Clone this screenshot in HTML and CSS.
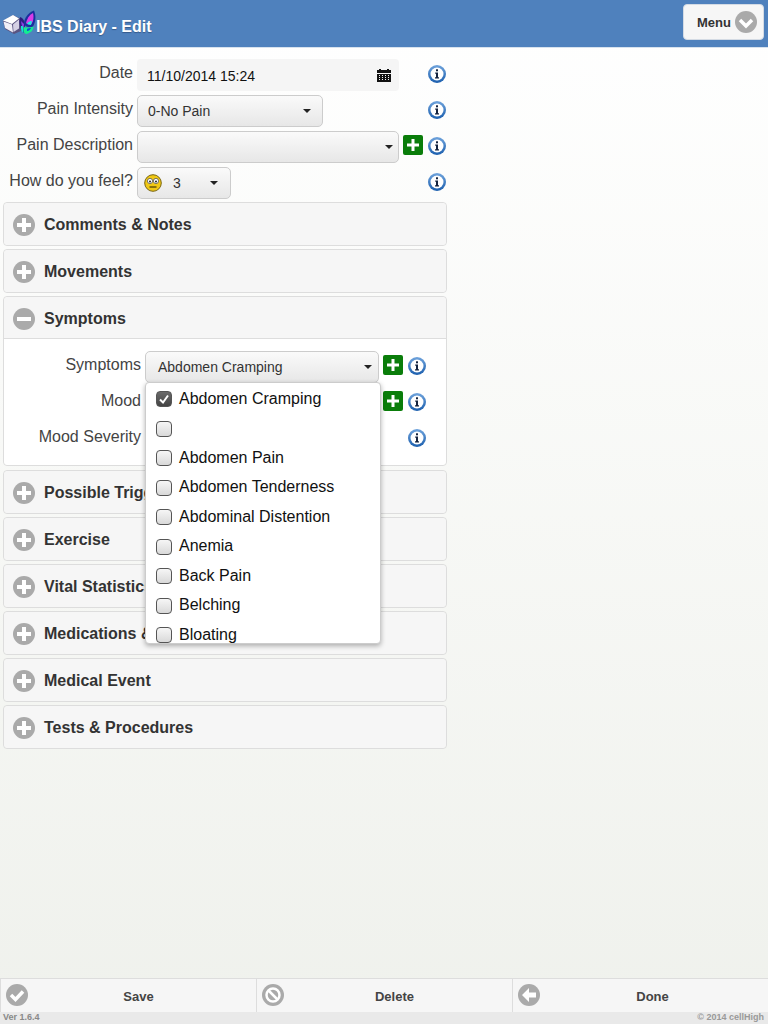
FILE: index.html
```html
<!DOCTYPE html>
<html lang="en">
<head>
    <meta charset="UTF-8">
    <meta name="viewport" content="width=device-width, initial-scale=1.0">
    <title>IBS Diary - Edit</title>
    <link rel="stylesheet" href="styles.css">
</head>
<body>
    <svg class="icon-defs" width="0" height="0">
        <defs>
            <linearGradient id="ring" x1="0" y1="0" x2="0" y2="1">
                <stop offset="0" stop-color="#6fa3dc"/>
                <stop offset="1" stop-color="#1c5fae"/>
            </linearGradient>
        </defs>
        <symbol id="info" viewBox="0 0 18 18">
            <circle cx="9" cy="9" r="9" fill="url(#ring)"/>
            <circle cx="9" cy="9" r="6.500" fill="#fff"/>
            <rect x="8" y="4.300" width="2" height="2" fill="#14233f"/>
            <path d="M7.200 7.400h2.800v4.800h1v1.300H7v-1.300h1V8.700h-.8z" fill="#14233f"/>
        </symbol>
        <symbol id="add" viewBox="0 0 20 20">
            <rect width="20" height="20" rx="2" fill="#0a7d0a"/>
            <path d="M8.500 4h3v4.500H16v3h-4.500V16h-3v-4.500H4v-3h4.500z" fill="#fff"/>
        </symbol>
        <symbol id="plus" viewBox="0 0 22 22">
            <circle cx="11" cy="11" r="11" fill="#aaa"/>
            <path d="M9 4h4v5h5v4h-5v5H9v-5H4V9h5z" fill="#fff"/>
        </symbol>
        <symbol id="minus" viewBox="0 0 22 22">
            <circle cx="11" cy="11" r="11" fill="#aaa"/>
            <rect x="4" y="9" width="14" height="4" fill="#fff"/>
        </symbol>
        <symbol id="caret" viewBox="0 0 8 4">
            <path d="M0 0h8L4 4z" fill="#222"/>
        </symbol>
    </svg>

    <header class="topbar">
        <svg class="logo" width="36" height="30" viewBox="0 0 36 30">
            <path d="M0 12 10 6l8 4v12l-7 3-9-5z" fill="#5a5480"/>
            <path d="M0 11.500 10 6l6 3.500-7 5.500z" fill="#fff"/>
            <path d="M.5 12.500 9 15.500l1 8-8-4.500z" fill="#f1eff7"/>
            <path d="M10 15.500l6-5v9l-5.500 3.500z" fill="#d5d1e4"/>
            <path d="M17 8c3 1 5 4 5 8l-1 8c-2 0-4-6-4.500-11z" fill="#2c1c80"/>
            <path d="M18 12l3 3-.5 6c-1-2-2-5-2.500-9z" fill="#8a3fe0"/>
            <path d="M21 15c0-6 4-11 10-13.500 2 5 2 11-1 16-3 1.500-7 1-9-2.500z" fill="#1a2f9e"/>
            <path d="M23 14c1-4 3-8 7-10 1 4 .5 8-1.500 11-2 1-4 .5-5.500-1z" fill="#d83ce8"/>
            <path d="M24 15c1-2 3-3 5-3l-1 4z" fill="#18f0e0"/>
            <path d="M21 18c3 1 7 .5 9.500-.5 0 3.500-3 7-7.500 7.500-2.500-1-3-4.500-2-7z" fill="#12ee90"/>
            <path d="M24 20c1-1 3-1 4-1-1 2-2 3-4 3z" fill="#0a50d0"/>
            <path d="M18 17l2 0 .5 7c-1 0-2-2-2.500-4z" fill="#18e0d0"/>
        </svg>
        <h1 class="topbar-title">IBS Diary - Edit</h1>
        <button type="button" class="menu-btn">Menu
            <svg width="22" height="22" viewBox="0 0 22 22">
                <circle cx="11" cy="11" r="11" fill="#aaa"/>
                <path d="M5 9l6 6 6-6" fill="none" stroke="#fff" stroke-width="3.500"/>
            </svg>
        </button>
    </header>

    <main class="content">
        <div class="form-row">
            <label class="field-label">Date</label>
            <div class="date-input">11/10/2014 15:24
                <svg class="calendar" width="14" height="13" viewBox="0 0 14 13">
                    <path d="M0 1h2V0h2v1h6V0h2v1h2v3H0z" fill="#111"/>
                    <path d="M0 5h14v8H0zM2 6v1h1V6zm3 0v1h1V6zm3 0v1h1V6zm3 0v1h1V6zM2 8v1h1V8zm3 0v1h1V8zm3 0v1h1V8zm3 0v1h1V8zM2 10v1h1v-1zm3 0v1h1v-1zm3 0v1h1v-1zm3 0v1h1v-1z" fill="#111" fill-rule="evenodd"/>
                </svg>
            </div>
            <svg class="info-icon"><use href="#info"/></svg>
        </div>
        <div class="form-row">
            <label class="field-label">Pain Intensity</label>
            <div class="select select-intensity">0-No Pain <svg class="caret"><use href="#caret"/></svg></div>
            <svg class="info-icon"><use href="#info"/></svg>
        </div>
        <div class="form-row">
            <label class="field-label">Pain Description</label>
            <div class="select select-wide"><svg class="caret"><use href="#caret"/></svg></div>
            <svg class="add-icon"><use href="#add"/></svg>
            <svg class="info-icon info-tight"><use href="#info"/></svg>
        </div>
        <div class="form-row form-row-last">
            <label class="field-label">How do you feel?</label>
            <div class="select select-feel">
                <svg class="smiley" width="18" height="18" viewBox="0 0 18 18">
                    <circle cx="9" cy="9" r="8.300" fill="#f0c814" stroke="#7a6610" stroke-width="1"/>
                    <circle cx="6" cy="7" r="2.600" fill="#fff" stroke="#555" stroke-width=".8"/>
                    <circle cx="12" cy="7" r="2.600" fill="#fff" stroke="#555" stroke-width=".8"/>
                    <circle cx="6" cy="7.400" r="1" fill="#222"/>
                    <circle cx="12" cy="7.400" r="1" fill="#222"/>
                    <path d="M5.500 13h7" stroke="#5c4c08" stroke-width="1.400"/>
                </svg>
                <span class="feel-value">3</span>
                <svg class="caret"><use href="#caret"/></svg>
            </div>
            <svg class="info-icon"><use href="#info"/></svg>
        </div>

        <section class="panel">
            <h2 class="panel-head"><svg class="panel-icon"><use href="#plus"/></svg>Comments &amp; Notes</h2>
        </section>
        <section class="panel">
            <h2 class="panel-head"><svg class="panel-icon"><use href="#plus"/></svg>Movements</h2>
        </section>
        <section class="panel panel-open">
            <h2 class="panel-head"><svg class="panel-icon"><use href="#minus"/></svg>Symptoms</h2>
            <div class="panel-body">
                <div class="form-row">
                    <label class="field-label">Symptoms</label>
                    <div class="select select-symptoms">Abdomen Cramping <svg class="caret"><use href="#caret"/></svg></div>
                    <svg class="add-icon"><use href="#add"/></svg>
                    <svg class="info-icon info-tight"><use href="#info"/></svg>
                </div>
                <div class="form-row">
                    <label class="field-label">Mood</label>
                    <div class="select select-symptoms"></div>
                    <svg class="add-icon"><use href="#add"/></svg>
                    <svg class="info-icon info-tight"><use href="#info"/></svg>
                </div>
                <div class="form-row">
                    <label class="field-label">Mood Severity</label>
                    <div class="select select-symptoms"></div>
                    <svg class="add-icon add-hidden"></svg>
                    <svg class="info-icon info-tight"><use href="#info"/></svg>
                </div>
                <ul class="dropdown">
                    <li class="dropdown-item"><span class="check check-on"><svg width="12" height="12" viewBox="0 0 12 12"><path d="M2 6.500l3 3 5-7" fill="none" stroke="#fff" stroke-width="2"/></svg></span>Abdomen Cramping</li>
                    <li class="dropdown-item"><span class="check"></span></li>
                    <li class="dropdown-item"><span class="check"></span>Abdomen Pain</li>
                    <li class="dropdown-item"><span class="check"></span>Abdomen Tenderness</li>
                    <li class="dropdown-item"><span class="check"></span>Abdominal Distention</li>
                    <li class="dropdown-item"><span class="check"></span>Anemia</li>
                    <li class="dropdown-item"><span class="check"></span>Back Pain</li>
                    <li class="dropdown-item"><span class="check"></span>Belching</li>
                    <li class="dropdown-item"><span class="check"></span>Bloating</li>
                </ul>
            </div>
        </section>
        <section class="panel">
            <h2 class="panel-head"><svg class="panel-icon"><use href="#plus"/></svg>Possible Triggers</h2>
        </section>
        <section class="panel">
            <h2 class="panel-head"><svg class="panel-icon"><use href="#plus"/></svg>Exercise</h2>
        </section>
        <section class="panel">
            <h2 class="panel-head"><svg class="panel-icon"><use href="#plus"/></svg>Vital Statistics</h2>
        </section>
        <section class="panel">
            <h2 class="panel-head"><svg class="panel-icon"><use href="#plus"/></svg>Medications &amp;</h2>
        </section>
        <section class="panel">
            <h2 class="panel-head"><svg class="panel-icon"><use href="#plus"/></svg>Medical Event</h2>
        </section>
        <section class="panel">
            <h2 class="panel-head"><svg class="panel-icon"><use href="#plus"/></svg>Tests &amp; Procedures</h2>
        </section>
    </main>

    <footer class="footer">
        <nav class="toolbar">
            <a class="tool-btn">
                <svg width="22" height="22" viewBox="0 0 22 22"><circle cx="11" cy="11" r="11" fill="#aaa"/><path d="M5 11l4.500 4.500L17 7.500" fill="none" stroke="#fff" stroke-width="3.500"/></svg>
                Save
            </a>
            <a class="tool-btn">
                <svg width="22" height="22" viewBox="0 0 22 22"><circle cx="11" cy="11" r="11" fill="#aaa"/><circle cx="11" cy="11" r="6.500" fill="none" stroke="#fff" stroke-width="2.500"/><path d="M6.500 6.500l9 9" stroke="#fff" stroke-width="2.500"/></svg>
                Delete
            </a>
            <a class="tool-btn">
                <svg width="22" height="22" viewBox="0 0 22 22"><circle cx="11" cy="11" r="11" fill="#aaa"/><path d="M11 4v4.500h7v5h-7V18l-7-7z" fill="#fff"/></svg>
                Done
            </a>
        </nav>
        <div class="footer-note">
            <span>Ver 1.6.4</span>
            <span class="copyright">© 2014 cellHigh</span>
        </div>
    </footer>
</body>
</html>
```

FILE: styles.css
```css
* {
    box-sizing: border-box;
}
html, body {
    height: 100%;
}
body {
    font-family: "Liberation Sans", Arial, sans-serif;
    display: flex;
    flex-direction: column;
    height: 100vh;
    margin: 0;
    color: #333;
    background: linear-gradient(#fff, #eff1ec);
    overflow: hidden;
}
.icon-defs {
    position: absolute;
}

/* header */
.topbar {
    display: flex;
    align-items: center;
    height: 48px;
    flex: none;
    padding: 0 4px 0 3px;
    background-color: #4f81bd;
    border-bottom: 1px solid #d7e2ee;
}
.logo {
    flex: none;
    margin: 0;
}
.topbar-title {
    flex: 1;
    margin: 0 0 0 -3px;
    padding-top: 7px;
    font-size: 16px;
    font-weight: bold;
    color: #fff;
    text-shadow: 0 1px 1px #35598a;
}
.menu-btn {
    display: flex;
    align-items: center;
    justify-content: space-between;
    width: 81px;
    height: 36px;
    padding: 0 6px 0 13px;
    margin-top: -3px;
    border: 1px solid #d4dbe4;
    border-radius: 4px;
    background-color: #f6f6f6;
    font-family: inherit;
    font-size: 13px;
    font-weight: bold;
    color: #333;
}

/* form rows */
.content {
    flex: 1;
    padding: 11px 321px 0 3px;
}
.form-row {
    display: flex;
    align-items: center;
    height: 32px;
    margin-bottom: 4px;
}
.form-row-last {
    margin-bottom: 3px;
}
.field-label {
    width: 130px;
    margin-right: 4px;
    padding-bottom: 5px;
    font-size: 16px;
    text-align: right;
    white-space: nowrap;
    color: #444;
}
.date-input {
    display: flex;
    align-items: center;
    justify-content: space-between;
    width: 262px;
    height: 32px;
    padding: 1px 8px 0 10px;
    border-radius: 4px;
    background-color: #f5f5f5;
    font-size: 14px;
    color: #111;
}
.select {
    display: flex;
    align-items: center;
    height: 32px;
    padding: 0 11px 0 10px;
    border: 1px solid #ccc;
    border-radius: 5px;
    background: linear-gradient(#fafafa, #e7e7e7);
    font-size: 14px;
    color: #333;
}
.select-intensity {
    width: 186px;
    margin-right: 105px;
}
.select-wide {
    width: 262px;
    padding-right: 5px;
}
.select-feel {
    width: 94px;
    margin-right: 197px;
    padding: 0 12px 0 6px;
}
.select-symptoms {
    width: 234px;
    padding: 0 6px 0 12px;
}
.caret {
    width: 8px;
    height: 4px;
    flex: none;
    margin-left: auto;
}
.smiley {
    flex: none;
}
.feel-value {
    margin-left: 11px;
}
.info-icon {
    width: 18px;
    height: 18px;
    flex: none;
    margin-top: -3px;
}
.info-tight {
    margin-left: 5px;
}
.add-icon {
    width: 20px;
    height: 20px;
    flex: none;
    margin: -4px 0 0 4px;
}
.add-hidden {
    visibility: hidden;
}
.date-input + .info-icon {
    margin-left: 29px;
}

/* collapsible panels */
.panel {
    margin-bottom: 3px;
    border: 1px solid #ddd;
    border-radius: 4px;
}
.panel-head {
    display: flex;
    align-items: center;
    height: 42px;
    margin: 0;
    padding: 2px 0 0 9px;
    border-radius: 4px;
    background-color: #f6f6f6;
    font-size: 16px;
    font-weight: bold;
    color: #333;
    white-space: nowrap;
    overflow: hidden;
}
.panel-icon {
    width: 22px;
    height: 22px;
    flex: none;
    margin-right: 9px;
}
.panel-open {
    margin-bottom: 4px;
}
.panel-open .panel-head {
    border-bottom: 1px solid #ddd;
    border-radius: 4px 4px 0 0;
}
.panel-body {
    position: relative;
    padding: 12px 0 6px;
    border-radius: 0 0 4px 4px;
    background-color: #fff;
}
.panel-body .form-row:last-of-type {
    margin-bottom: 4px;
}
.panel-body .field-label {
    width: 137px;
}

/* open multi select */
.dropdown {
    position: absolute;
    top: 43px;
    left: 141px;
    z-index: 2;
    width: 236px;
    height: 262px;
    margin: 0;
    padding: 1px 0 0;
    list-style: none;
    overflow: hidden;
    background-color: #fff;
    border: 1px solid #ccc;
    border-radius: 4px;
    box-shadow: 0 2px 5px rgba(0,0,0,.3);
}
.dropdown-item {
    display: flex;
    align-items: center;
    height: 29.5px;
    flex: none;
    padding-left: 10px;
    font-size: 16px;
    color: #111;
    white-space: nowrap;
}
.check {
    display: flex;
    align-items: center;
    justify-content: center;
    width: 16px;
    height: 16px;
    flex: none;
    margin: 1px 7px 0 0;
    border: 1px solid #555;
    border-radius: 4px;
    background: linear-gradient(#f6f6f6, #d9d9d9);
}
.check-on {
    background: linear-gradient(#6a6a6a, #444);
}

/* bottom toolbar */
.footer {
    flex: none;
}
.toolbar {
    display: grid;
    grid-template-columns: repeat(3, 1fr);
    height: 34px;
    background-color: #f6f6f6;
    border-top: 1px solid #ddd;
}
.tool-btn {
    position: relative;
    display: flex;
    align-items: center;
    justify-content: center;
    padding: 1px 0 0 20px;
    font-size: 13px;
    font-weight: bold;
    color: #444;
    border-left: 1px solid #ddd;
}
.tool-btn:last-child {
    padding-left: 24px;
}
.tool-btn svg {
    position: absolute;
    left: 5px;
    top: 5px;
}
.footer-note {
    display: flex;
    justify-content: space-between;
    height: 12px;
    padding: 0 4px 0 3px;
    background-color: #e9e9e9;
    font-size: 9px;
    font-weight: bold;
    line-height: 11px;
    color: #888;
}
.copyright {
    color: #999;
}
```
